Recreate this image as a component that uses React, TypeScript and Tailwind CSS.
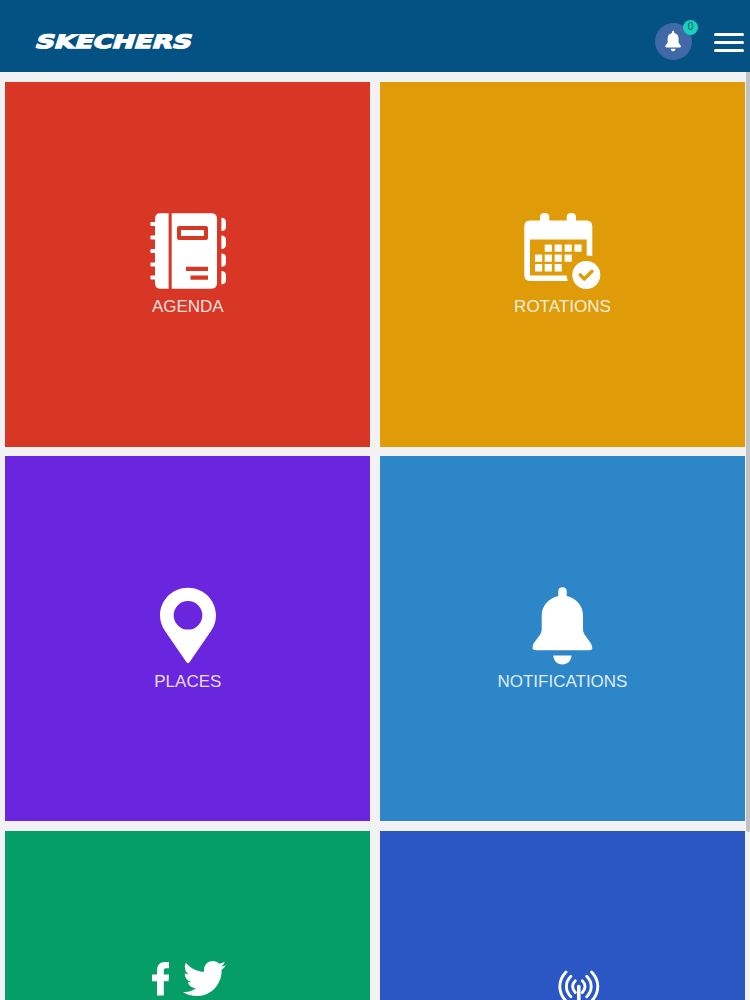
import type { ReactNode } from "react";
import { FaTwitter } from "react-icons/fa";

const ICON = "block h-[76px] w-[76px] overflow-visible";

function AgendaIcon() {
  return (
    <svg viewBox="0 0 76 76" className={ICON} fill="#fff">
      <path d="M10 .3H18.6V75.7H10Q5 75.7 5 70V6Q5 .3 10 .3Z" />
      {[11, 24.5, 38, 51.5, 64.5].map((y) => (
        <rect key={y} x=".4" y={y - 2.1} width="7" height="4.2" rx="1" />
      ))}
      <path d="M21.7 .3H61.500Q67 .3 67 6V70Q67 75.700 61.500 75.700H21.700Z" />
      {[4.7, 22.6, 40.4, 58].map((y) => (
        <path key={y} d={`M71.4 ${y}Q76 ${y} 76 ${y + 4.5}V${y + 9}Q76 ${y + 13.4} 71.4 ${y + 13.4}Z`} />
      ))}
      <rect x="29" y="15" width="27" height="10" fill="none" stroke="#d83725" strokeWidth="4" strokeLinejoin="round" />
      <path d="M36 53.7H58V58H36ZM40.5 62.6H58V66.8H40.5Z" fill="#d83725" />
    </svg>
  );
}

function RotationsIcon() {
  const cells = [
    [20.7, 32], [30.6, 32], [40.6, 32], [50.4, 32],
    [11, 42], [20.7, 42], [30.6, 42], [40.6, 42],
    [11, 51.6], [20.7, 51.6], [30.6, 51.6],
  ];
  return (
    <svg viewBox="0 0 76 76" className={ICON} fill="#fff">
      <path d="M6 7.5H16V4Q16 0 20.7 0T25.3 4V7.5H42.7V4Q42.7 0 47.3 0T52 4V7.5H62.5Q68.3 7.500 68.3 13.500V43.2Q65.5 42.4 62.7 42.7V26.5H6V62.5H42.7Q42.8 65.5 43.9 68H6Q.3 68 .3 62.3V13.5Q.3 7.5 6 7.5Z" />
      {cells.map(([x, y]) => (
        <rect key={`${x}-${y}`} x={x} y={y - 0.6} width="7.2" height="7.4" rx=".5" />
      ))}
      <circle cx="62.300" cy="62" r="14" />
      <path d="M56.300 61.800L60.300 66L68 58.300" fill="none" stroke="#e09b08" strokeWidth="3.400" strokeLinecap="round" strokeLinejoin="round" />
    </svg>
  );
}

function PlacesIcon() {
  return (
    <svg viewBox="0 0 76 76" className={ICON} fill="#fff">
      <path fillRule="evenodd" d="M38 -.3C22.500 -.3 10 12 10 27.500C10 33.500 12 38.500 15 43L36 73.500Q38 77 40 73.500L61 43C64 38.500 66 33.500 66 27.500C66 12 53.500 -.3 38 -.3ZM38 13A14.300 14.300 0 1 1 38 41.600A14.300 14.300 0 1 1 38 13Z" />
    </svg>
  );
}

function BellIcon({ className }: { className: string }) {
  return (
    <svg viewBox="0 0 76 76" className={className} fill="#fff">
      <path d="M34.300 8V3.500Q34.300 -.7 38.500 -.7T42.700 3.500V8C52 10 59 17.500 59 27.500V41.500Q59 44.500 60.500 46.500L67 55.500Q70.500 62.300 65 62.300H12Q6.500 62.300 9.500 55.500L16.200 46.500Q17.700 44.500 17.700 41.500V27.500C17.700 17.500 25 10 34.300 8ZM29.300 67.500H47.500C47.500 72.500 43.500 76.500 38.400 76.500S29.300 72.500 29.300 67.500Z" />
    </svg>
  );
}

function SocialIcon() {
  return (
    <div className="flex h-[76px] w-[76px] items-start pl-[2px]">
      <svg viewBox="0 0 17.5 34" className="mt-[0.5px] h-[34px] w-[17.5px] shrink-0" fill="#fff">
        <path d="M5 33.500V19.300H0V12.500H5V9C5 3 8 0 13 0H17.200V6.300H14C12.300 6.300 11.800 7.200 11.800 9V12.500H17.200L16.500 19.300H11.800V33.500Z" />
      </svg>
      <FaTwitter className="-mt-[5px] ml-[14px] h-[43px] w-[43px] shrink-0 text-white" />
    </div>
  );
}

function BroadcastIcon() {
  return (
    <svg viewBox="0 0 76 76" className={ICON} fill="none" stroke="#fff" strokeWidth="2.900" strokeLinecap="round">
      <path d="M42 10Q35.800 16.500 35.800 24.500T42 39M67.600 10Q73.800 16.500 73.800 24.500T67.600 39" />
      <path d="M46.900 14.300Q42.400 18.800 42.400 24.500T46.900 34.700M62.700 14.300Q67.200 18.800 67.200 24.500T62.700 34.700" />
      <path d="M51.300 18.700Q48.600 21.200 48.600 24.500T51.300 30.500M58.300 18.700Q61 21.200 61 24.500T58.300 30.500" />
      <path d="M54.800 24.500V70" strokeWidth="3.600" />
    </svg>
  );
}

function Tile({ color, label, children }: { color: string; label?: string; children: ReactNode }) {
  return (
    <div className={`flex h-[364.5px] flex-col items-center justify-center pl-[0.75px] ${color}`}>
      {children}
      <span className="mt-[6px] h-[20px] text-[17px] leading-[24.5px] text-[#ffffffdd]">{label}</span>
    </div>
  );
}

export default function App() {
  return (
    <div className="flex h-[1000px] w-[750px] flex-col overflow-hidden bg-[#f2f2f4] font-['Liberation_Sans',Arial,sans-serif]">
      <header className="flex h-[72px] shrink-0 items-center justify-between bg-[#045283] pt-[10px] pr-[6px] pl-[34px]">
        <svg viewBox="0 0 162 24" className="h-[24px] w-[162px] overflow-visible" role="img" aria-label="SKECHERS">
          <text
            x="0"
            y="19"
            transform="translate(6.500 0) skewX(-18)"
            textLength="156"
            lengthAdjust="spacingAndGlyphs"
            className="font-['DejaVu_Sans',sans-serif] text-[18.5px] font-bold"
            fill="#fff"
            stroke="#fff"
            strokeWidth="1.3"
          >
            SKECHERS
          </text>
        </svg>
        <div className="flex items-center gap-[22px]">
          <button className="relative flex h-[37px] w-[37px] items-center justify-center rounded-full bg-[#4169a8] pr-[1px]">
            <BellIcon className="h-[20px] w-[20px] overflow-visible" />
            <span className="absolute -top-[3px] -right-[6px] flex h-[15px] w-[15px] items-center justify-center rounded-full bg-[#18d1bd] text-[10px] leading-none text-[#07544f]">
              0
            </span>
          </button>
          <button className="flex w-[30px] flex-col gap-[5px] pt-[2px]" aria-label="Menu">
            <span className="h-[3px] rounded-full bg-white" />
            <span className="h-[3px] rounded-full bg-white" />
            <span className="h-[3px] rounded-full bg-white" />
          </button>
        </div>
      </header>
      <div className="flex min-h-0 flex-1 justify-between">
        <main className="grid w-[744.5px] grid-cols-2 content-start gap-[9.75px] pt-[10px] pl-[5px]">
          <Tile color="bg-[#d83725]" label="AGENDA"><AgendaIcon /></Tile>
          <Tile color="bg-[#e09b08]" label="ROTATIONS"><RotationsIcon /></Tile>
          <Tile color="bg-[#6a25df]" label="PLACES"><PlacesIcon /></Tile>
          <Tile color="bg-[#2c86c7]" label="NOTIFICATIONS"><BellIcon className={ICON} /></Tile>
          <Tile color="bg-[#069e67]"><SocialIcon /></Tile>
          <Tile color="bg-[#2b57c4]"><BroadcastIcon /></Tile>
        </main>
        <div className="w-[4px]">
          <div className="h-[760px] rounded-b-sm bg-[#c2c2c4]" />
        </div>
      </div>
    </div>
  );
}
